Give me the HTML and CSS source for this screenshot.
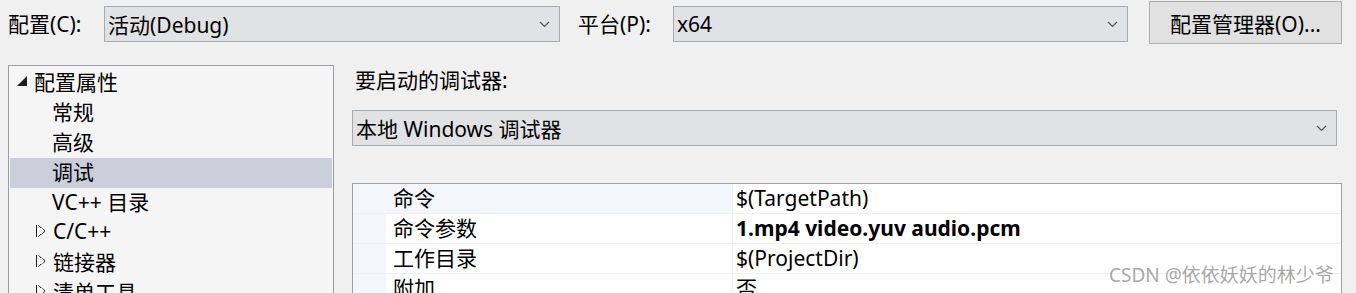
FILE: index.html
```html
<!DOCTYPE html>
<html lang="zh-CN">
<head>
    <meta charset="UTF-8">
    <title>调试属性页</title>
    <link rel="stylesheet" href="styles.css">
</head>
<body>
    <header class="toolbar">
        <label class="field-label first">配置(C):</label>
        <div class="combo combo-config">
            <span>活动(Debug)</span>
            <svg class="chevron" width="11" height="7" viewBox="0 0 11 7"><polyline points="1,1 5.5,5.5 10,1" fill="none" stroke="#555" stroke-width="1.2"/></svg>
        </div>
        <label class="field-label second">平台(P):</label>
        <div class="combo combo-platform">
            <span>x64</span>
            <svg class="chevron" width="11" height="7" viewBox="0 0 11 7"><polyline points="1,1 5.5,5.5 10,1" fill="none" stroke="#555" stroke-width="1.2"/></svg>
        </div>
        <button class="manager-btn">配置管理器(O)...</button>
    </header>

    <main class="content">
        <nav class="tree">
            <div class="tree-row root"><span class="arrow-open"></span>配置属性</div>
            <div class="tree-row child">常规</div>
            <div class="tree-row child">高级</div>
            <div class="tree-row child selected">调试</div>
            <div class="tree-row child">VC++ 目录</div>
            <div class="tree-row branch"><span class="arrow-closed"></span>C/C++</div>
            <div class="tree-row branch"><span class="arrow-closed"></span>链接器</div>
            <div class="tree-row branch"><span class="arrow-closed"></span>清单工具</div>
        </nav>

        <section class="panel">
            <div class="panel-label">要启动的调试器:</div>
            <div class="combo combo-debugger">
                <span>本地 Windows 调试器</span>
                <svg class="chevron" width="11" height="7" viewBox="0 0 11 7"><polyline points="1,1 5.5,5.5 10,1" fill="none" stroke="#555" stroke-width="1.2"/></svg>
            </div>

            <div class="grid">
                <div class="grid-row active">
                    <div class="gutter"></div>
                    <div class="name">命令</div>
                    <div class="value">$(TargetPath)</div>
                </div>
                <div class="grid-row">
                    <div class="gutter"></div>
                    <div class="name">命令参数</div>
                    <div class="value bold">1.mp4 video.yuv audio.pcm</div>
                </div>
                <div class="grid-row">
                    <div class="gutter"></div>
                    <div class="name">工作目录</div>
                    <div class="value">$(ProjectDir)</div>
                </div>
                <div class="grid-row">
                    <div class="gutter"></div>
                    <div class="name">附加</div>
                    <div class="value">否</div>
                </div>
            </div>
        </section>
    </main>

    <div class="watermark">CSDN @依依妖妖的林少爷</div>
</body>
</html>
```

FILE: styles.css
```css
* {
    margin: 0;
    padding: 0;
    box-sizing: border-box;
}

body {
    font-family: "Noto Sans", "Noto Sans CJK SC", sans-serif;
    font-size: 21px;
    color: #000;
    background: #f0f0f0;
    width: 1356px;
    height: 293px;
    overflow: hidden;
    position: relative;
}

/* top bar */
.toolbar {
    display: flex;
    align-items: flex-start;
    height: 55px;
}

.field-label {
    line-height: 36px;
    margin-top: 6px;
    white-space: nowrap;
}

.field-label.first {
    padding-left: 8px;
    width: 104px;
}

.field-label.second {
    margin-left: 18px;
    width: 95px;
}

.combo {
    display: flex;
    align-items: center;
    justify-content: space-between;
    height: 36px;
    padding: 0 9px 0 3px;
    background: #e1e2e4;
    border: 1px solid #a5abb2;
    white-space: nowrap;
}

.combo-config {
    width: 456px;
    margin-top: 6px;
}

.combo-platform {
    width: 455px;
    margin-top: 6px;
}

.chevron {
    display: block;
    flex-shrink: 0;
}

.manager-btn {
    width: 193px;
    height: 43px;
    margin-top: 1px;
    margin-left: 21px;
    font-family: inherit;
    font-size: 21px;
    color: #000;
    background: #e1e1e1;
    border: 1px solid #adadad;
    white-space: nowrap;
}

/* main area */
.content {
    display: flex;
    align-items: flex-start;
    padding-top: 10px;
}

.tree {
    width: 326px;
    height: 260px;
    margin-left: 8px;
    padding: 1px;
    background: #f5f5f5;
    border: 1px solid #9c9ca4;
}

.tree-row {
    display: flex;
    align-items: center;
    height: 30px;
    padding-bottom: 5px;
    white-space: nowrap;
}

.tree-row.root {
    margin-top: 1px;
    padding-left: 7px;
}

.tree-row.child {
    padding-left: 42px;
}

.tree-row.branch {
    padding-left: 26px;
}

.tree-row.selected {
    background: #cccedb;
}

.arrow-open {
    width: 0;
    height: 0;
    margin-right: 7px;
    border-left: 10px solid transparent;
    border-bottom: 10px solid #1e1e1e;
}

.arrow-closed {
    width: 9px;
    height: 12px;
    margin-right: 8px;
    background: linear-gradient(to top right, transparent 49%, #1e1e1e 50%, transparent 62%) top / 100% 50% no-repeat,
                linear-gradient(to bottom right, transparent 49%, #1e1e1e 50%, transparent 62%) bottom / 100% 50% no-repeat;
    border-left: 1px solid #1e1e1e;
}

.panel {
    width: 990px;
    margin-left: 18px;
}

.panel-label {
    height: 45px;
    line-height: 30px;
    padding-left: 3px;
}

.combo-debugger {
    width: 985px;
}

.grid {
    margin-top: 37px;
    background: #fff;
    border: 1px solid #a0a0a0;
    height: 120px;
}

.grid-row {
    display: flex;
    height: 30px;
    border-bottom: 1px solid #f0f0f0;
}

.gutter {
    width: 33px;
    background: #f3f6fb;
}

.name {
    width: 347px;
    padding-left: 7px;
    line-height: 29px;
    border-right: 1px solid #f0f0f0;
    white-space: nowrap;
}

.grid-row.active .name {
    background: #f3f6fb;
}

.value {
    flex: 1;
    padding-left: 3px;
    line-height: 29px;
    white-space: nowrap;
}

.value.bold {
    font-weight: bold;
}

.watermark {
    position: absolute;
    left: 1109px;
    top: 260px;
    font-size: 19px;
    color: rgba(130, 130, 130, 0.7);
    white-space: nowrap;
}
```
